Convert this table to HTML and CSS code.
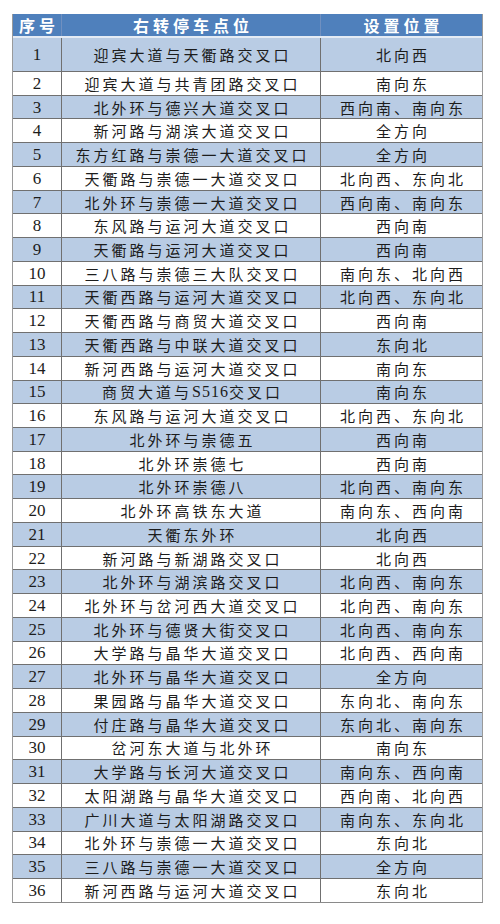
FILE: index.html
```html
<!DOCTYPE html>
<html lang="zh-CN">
<head>
<meta charset="utf-8">
<title>右转停车点位</title>
<link rel="stylesheet" href="styles.css">
</head>
<body>
<div class="table">
  <div class="row head"><div class="c n">序号</div><div class="c">右转停车点位</div><div class="c">设置位置</div></div>
  <div class="row odd first"><div class="c n">1</div><div class="c">迎宾大道与天衢路交叉口</div><div class="c">北向西</div></div>
  <div class="row"><div class="c n">2</div><div class="c">迎宾大道与共青团路交叉口</div><div class="c">南向东</div></div>
  <div class="row odd"><div class="c n">3</div><div class="c">北外环与德兴大道交叉口</div><div class="c">西向南、南向东</div></div>
  <div class="row"><div class="c n">4</div><div class="c">新河路与湖滨大道交叉口</div><div class="c">全方向</div></div>
  <div class="row odd"><div class="c n">5</div><div class="c">东方红路与崇德一大道交叉口</div><div class="c">全方向</div></div>
  <div class="row"><div class="c n">6</div><div class="c">天衢路与崇德一大道交叉口</div><div class="c">北向西、东向北</div></div>
  <div class="row odd"><div class="c n">7</div><div class="c">北外环与崇德一大道交叉口</div><div class="c">西向南、南向东</div></div>
  <div class="row"><div class="c n">8</div><div class="c">东风路与运河大道交叉口</div><div class="c">西向南</div></div>
  <div class="row odd"><div class="c n">9</div><div class="c">天衢路与运河大道交叉口</div><div class="c">西向南</div></div>
  <div class="row"><div class="c n">10</div><div class="c">三八路与崇德三大队交叉口</div><div class="c">南向东、北向西</div></div>
  <div class="row odd"><div class="c n">11</div><div class="c">天衢西路与运河大道交叉口</div><div class="c">北向西、东向北</div></div>
  <div class="row"><div class="c n">12</div><div class="c">天衢西路与商贸大道交叉口</div><div class="c">西向南</div></div>
  <div class="row odd"><div class="c n">13</div><div class="c">天衢西路与中联大道交叉口</div><div class="c">东向北</div></div>
  <div class="row"><div class="c n">14</div><div class="c">新河西路与运河大道交叉口</div><div class="c">南向东</div></div>
  <div class="row odd"><div class="c n">15</div><div class="c">商贸大道与<span class="lat">S516</span>交叉口</div><div class="c">南向东</div></div>
  <div class="row"><div class="c n">16</div><div class="c">东风路与运河大道交叉口</div><div class="c">北向西、东向北</div></div>
  <div class="row odd"><div class="c n">17</div><div class="c">北外环与崇德五</div><div class="c">西向南</div></div>
  <div class="row"><div class="c n">18</div><div class="c">北外环崇德七</div><div class="c">西向南</div></div>
  <div class="row odd"><div class="c n">19</div><div class="c">北外环崇德八</div><div class="c">北向西、南向东</div></div>
  <div class="row"><div class="c n">20</div><div class="c">北外环高铁东大道</div><div class="c">南向东、西向南</div></div>
  <div class="row odd"><div class="c n">21</div><div class="c">天衢东外环</div><div class="c">北向西</div></div>
  <div class="row"><div class="c n">22</div><div class="c">新河路与新湖路交叉口</div><div class="c">北向西</div></div>
  <div class="row odd"><div class="c n">23</div><div class="c">北外环与湖滨路交叉口</div><div class="c">北向西、南向东</div></div>
  <div class="row"><div class="c n">24</div><div class="c">北外环与岔河西大道交叉口</div><div class="c">北向西、南向东</div></div>
  <div class="row odd"><div class="c n">25</div><div class="c">北外环与德贤大街交叉口</div><div class="c">北向西、南向东</div></div>
  <div class="row"><div class="c n">26</div><div class="c">大学路与晶华大道交叉口</div><div class="c">北向西、西向南</div></div>
  <div class="row odd"><div class="c n">27</div><div class="c">北外环与晶华大道交叉口</div><div class="c">全方向</div></div>
  <div class="row"><div class="c n">28</div><div class="c">果园路与晶华大道交叉口</div><div class="c">东向北、南向东</div></div>
  <div class="row odd"><div class="c n">29</div><div class="c">付庄路与晶华大道交叉口</div><div class="c">东向北、南向东</div></div>
  <div class="row"><div class="c n">30</div><div class="c">岔河东大道与北外环</div><div class="c">南向东</div></div>
  <div class="row odd"><div class="c n">31</div><div class="c">大学路与长河大道交叉口</div><div class="c">南向东、西向南</div></div>
  <div class="row"><div class="c n">32</div><div class="c">太阳湖路与晶华大道交叉口</div><div class="c">西向南、北向西</div></div>
  <div class="row odd"><div class="c n">33</div><div class="c">广川大道与太阳湖路交叉口</div><div class="c">南向东、东向北</div></div>
  <div class="row"><div class="c n">34</div><div class="c">北外环与崇德一大道交叉口</div><div class="c">东向北</div></div>
  <div class="row odd"><div class="c n">35</div><div class="c">三八路与崇德一大道交叉口</div><div class="c">全方向</div></div>
  <div class="row"><div class="c n">36</div><div class="c">新河西路与运河大道交叉口</div><div class="c">东向北</div></div>
</div>
</body>
</html>
```
FILE: styles.css
```css
html, body {
  margin: 0;
  padding: 0;
  background: #ffffff;
}
body {
  padding: 14px 0 0 12px;
  font-family: "Noto Sans CJK SC", "Liberation Serif", sans-serif;
  color: #1c1c1c;
}
.table {
  width: 471px;
  box-sizing: border-box;
  border-left: 1px solid #9a9a9a;
  border-right: 1px solid #9a9a9a;
  border-bottom: 1px solid #8a8a8a;
}
.row {
  display: grid;
  grid-template-columns: 49px 259px 161px;
  height: 23.74px;
  box-sizing: border-box;
  border-bottom: 1px solid #707070;
  background: #ffffff;
}
.row:last-child {
  border-bottom: none;
  height: 22.74px;
}
.row.odd {
  background: #b9cce4;
}
.row.first {
  height: 34px;
}
.row.head {
  height: 24px;
  background: #4f80bc;
  border-bottom: 2px solid #e4ebf4;
  color: #ffffff;
}
.c {
  display: flex;
  align-items: center;
  justify-content: center;
  font-size: 15px;
  letter-spacing: 3px;
  padding-left: 3px;
  line-height: 1;
  white-space: nowrap;
  border-right: 1px solid #707070;
}
.c:last-child {
  border-right: none;
}
.c.n {
  font-family: "Liberation Serif", "Noto Sans CJK SC", serif;
  font-size: 17px;
  letter-spacing: 0;
  padding-left: 0;
}
.lat {
  font-family: "Liberation Serif", serif;
  font-size: 16px;
  letter-spacing: 1px;
}
.head .c {
  font-family: "Noto Sans CJK SC", sans-serif;
  font-weight: 700;
  font-size: 16px;
  letter-spacing: 4px;
  padding-left: 4px;
  border-right-color: #7090c0;
}
```
